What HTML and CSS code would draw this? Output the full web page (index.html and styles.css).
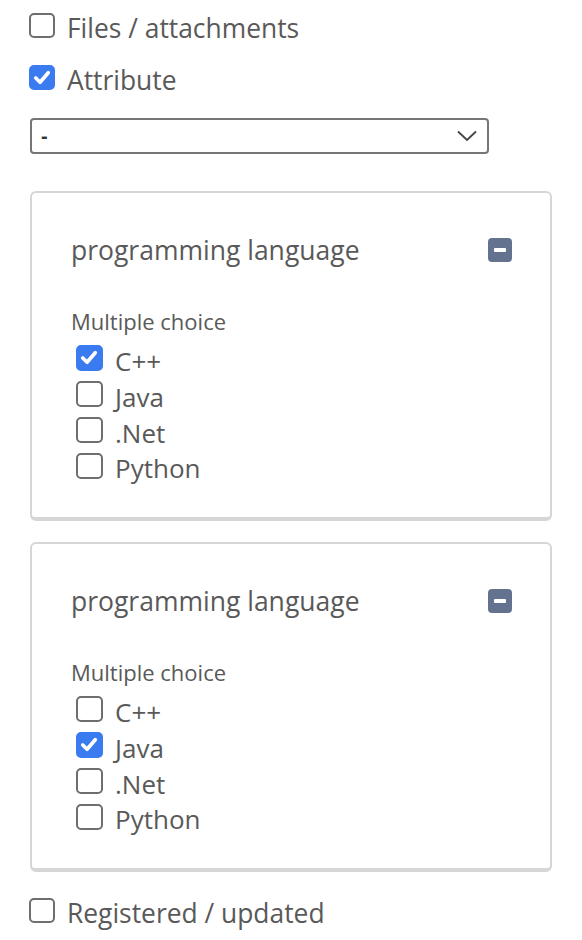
FILE: index.html
```html
<!DOCTYPE html>
<html>
<head>
<meta charset="utf-8">
<link rel="stylesheet" href="styles.css">
</head>
<body>
<div class="page">
  <label class="row row-first"><span class="cb"></span><span class="lbl">Files / attachments</span></label>
  <label class="row row-second"><span class="cb on"><svg viewBox="0 0 26 26"><path d="M6.5 13.5 L11 18 L19.5 8" /></svg></span><span class="lbl">Attribute</span></label>
  <div class="select"><span class="sel-val">-</span><svg class="chev" viewBox="0 0 20 12"><polyline points="1,1.5 10,10 19,1.5"/></svg></div>

  <div class="panel">
    <div class="panel-head"><span class="title">programming language</span><span class="minus"><span class="bar"></span></span></div>
    <div class="sub">Multiple choice</div>
    <div class="opts">
      <label class="opt"><span class="cb on"><svg viewBox="0 0 26 26"><path d="M6.5 13.5 L11 18 L19.5 8" /></svg></span><span class="lbl">C++</span></label>
      <label class="opt"><span class="cb"></span><span class="lbl">Java</span></label>
      <label class="opt"><span class="cb"></span><span class="lbl">.Net</span></label>
      <label class="opt"><span class="cb"></span><span class="lbl">Python</span></label>
    </div>
  </div>

  <div class="panel panel-2">
    <div class="panel-head"><span class="title">programming language</span><span class="minus"><span class="bar"></span></span></div>
    <div class="sub">Multiple choice</div>
    <div class="opts">
      <label class="opt"><span class="cb"></span><span class="lbl">C++</span></label>
      <label class="opt"><span class="cb on"><svg viewBox="0 0 26 26"><path d="M6.5 13.5 L11 18 L19.5 8" /></svg></span><span class="lbl">Java</span></label>
      <label class="opt"><span class="cb"></span><span class="lbl">.Net</span></label>
      <label class="opt"><span class="cb"></span><span class="lbl">Python</span></label>
    </div>
  </div>

  <label class="row row-last"><span class="cb"></span><span class="lbl">Registered / updated</span></label>
</div>
</body>
</html>
```
FILE: styles.css
```css
html, body {
  margin: 0;
  padding: 0;
  background: #ffffff;
}
body {
  font-family: "Open Sans", "Noto Sans", sans-serif;
  color: #595959;
}
.page {
  padding-left: 29px;
  padding-top: 10px;
  width: 523px;
}
.row {
  display: flex;
  align-items: center;
  gap: 12px;
  height: 36px;
  font-size: 26.4px;
  line-height: 36px;
}
.row-second { margin-top: 16px; }
.row-last { margin-top: 23px; }
.cb {
  box-sizing: border-box;
  width: 26px;
  height: 25px;
  border: 2px solid #6e6e6e;
  border-radius: 5px;
  background: #fff;
  flex: none;
  margin-bottom: 6px;
  display: flex;
}
.cb.on {
  background: #3a7bf0;
  border-color: #3a7bf0;
}
.cb svg {
  width: 26px;
  height: 25px;
  margin: -2px;
}
.cb svg path {
  fill: none;
  stroke: #fff;
  stroke-width: 3.8;
  stroke-linecap: round;
  stroke-linejoin: round;
}
.select {
  box-sizing: border-box;
  margin-top: 20px;
  margin-left: 1px;
  width: 459px;
  height: 36px;
  border: 2px solid #767676;
  border-radius: 4px;
  display: flex;
  align-items: center;
  justify-content: space-between;
  padding: 0 10px 0 9px;
}
.sel-val {
  font-family: "Liberation Sans", Arial, sans-serif;
  font-size: 20px;
  font-weight: bold;
  color: #333;
  line-height: 20px;
}
.chev {
  width: 20px;
  height: 12px;
}
.chev polyline {
  fill: none;
  stroke: #444;
  stroke-width: 1.8;
}
.panel {
  box-sizing: border-box;
  margin-top: 37px;
  margin-left: 1px;
  width: 522px;
  height: 330px;
  border: 2px solid #d6d6d6;
  border-bottom-width: 4px;
  border-radius: 6px;
  padding: 39px 38px 0 38px;
}
.panel-2 { margin-top: 21px; }
.panel-head {
  display: flex;
  justify-content: space-between;
  align-items: center;
  height: 36px;
}
.title {
  font-size: 26.5px;
  line-height: 36px;
  padding-left: 1px;
}
.minus {
  width: 24px;
  height: 24px;
  background: #63738f;
  border-radius: 4px;
  display: flex;
  align-items: center;
  justify-content: center;
}
.bar {
  width: 12px;
  height: 4px;
  background: #fff;
  border-radius: 1px;
}
.sub {
  margin-top: 38px;
  font-size: 22px;
  line-height: 30px;
  padding-left: 1px;
}
.opts {
  margin-top: 7px;
  margin-left: 6px;
}
.opt {
  display: flex;
  align-items: center;
  gap: 12px;
  height: 35.8px;
  font-size: 26px;
  line-height: 36px;
}
.opt .cb {
  width: 27px;
  height: 26px;
  margin-bottom: 5px;
}
```
